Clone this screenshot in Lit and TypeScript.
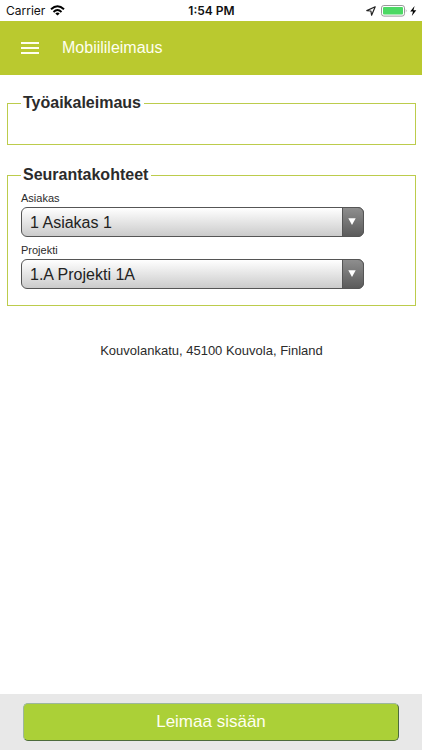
import { LitElement, html, css } from "lit";
import { customElement, property } from "lit/decorators.js";

@customElement("status-bar")
class StatusBar extends LitElement {
  static styles = css`
    :host {
      display: grid;
      grid-template-columns: 1fr auto 1fr;
      align-items: center;
      height: 21px;
      padding: 0 5px 0 6px;
      box-sizing: border-box;
      background: #fff;
      color: #111;
      font: 12px/20px Inter, Roboto, sans-serif;
    }
    .side {
      display: flex;
      align-items: center;
      gap: 5px;
    }
    .end {
      justify-content: flex-end;
    }
    .time {
      font-weight: 600;
    }
    svg {
      display: block;
    }
  `;

  render() {
    return html`
      <div class="side">
        <span>Carrier</span>
        <svg width="15" height="11" viewBox="0 0 15 11" fill="none" stroke="#000" stroke-width="2" aria-hidden="true">
          <path d="M1 4.3Q7.5 -1.7 14 4.3" />
          <path d="M3.5 6.9Q7.5 3.2 11.5 6.9" />
          <path d="M7.5 10.6L5.3 8.5Q7.5 6.7 9.7 8.5Z" fill="#000" stroke="none" />
        </svg>
      </div>
      <span class="time">1:54 PM</span>
      <div class="side end">
        <svg width="10" height="10" viewBox="0 0 10 10" fill="none" stroke="#222" stroke-width="1.2" stroke-linejoin="round" aria-hidden="true">
          <path d="M9.2 0.8L0.8 4.6L4.9 5L5.6 9.2Z" />
        </svg>
        <svg width="36" height="12" viewBox="0 0 36 12" aria-hidden="true">
          <rect x="0.5" y="0.5" width="23" height="10.6" rx="2.4" fill="#fff" stroke="#999" />
          <rect x="2" y="2" width="20" height="7.6" rx="1" fill="#4cd964" />
          <path d="M24.8 4Q26.4 5.8 24.8 7.6Z" fill="#999" />
          <path d="M33.6 1L29.2 6.5H32L30.8 11L35.3 5.2H32.4Z" fill="#000" />
        </svg>
      </div>
    `;
  }
}

@customElement("select-field")
class SelectField extends LitElement {
  @property() label = "";
  @property() value = "";

  static styles = css`
    :host {
      display: block;
    }
    label {
      display: block;
      font-size: 11px;
      line-height: 18px;
    }
    .box {
      position: relative;
      width: 90%;
    }
    select {
      appearance: none;
      display: block;
      width: 100%;
      height: 30px;
      margin: 0;
      padding: 0 30px 0 8px;
      border: 1px solid #555;
      border-radius: 6px;
      background: linear-gradient(#fff, #cbcbcb);
      color: #222;
      font: inherit;
      font-size: 16px;
    }
    .arrow {
      position: absolute;
      top: 0;
      right: 0;
      bottom: 0;
      width: 22px;
      display: flex;
      align-items: center;
      justify-content: center;
      box-sizing: border-box;
      padding: 0 2px 2px 0;
      border: 1px solid #555;
      border-radius: 0 6px 6px 0;
      background: linear-gradient(#8e8e8e, #5b5b5b);
      pointer-events: none;
    }
  `;

  render() {
    return html`
      <label for="field">${this.label}</label>
      <div class="box">
        <select id="field">
          <option>${this.value}</option>
        </select>
        <span class="arrow">
          <svg width="8" height="7" viewBox="0 0 8 7" aria-hidden="true"><path d="M0.3 0.3H7.7L4 7Z" fill="#fff" /></svg>
        </span>
      </div>
    `;
  }
}

@customElement("app-root")
class AppRoot extends LitElement {
  static styles = css`
    :host {
      display: flex;
      flex-direction: column;
      min-height: 100vh;
      background: #fff;
      color: #2b2b2b;
      font-family: "Liberation Sans", Arial, sans-serif;
    }
    header {
      display: flex;
      align-items: center;
      gap: 22px;
      height: 54px;
      padding: 0 20px;
      background: #bac92f;
      color: #fffff0;
    }
    .menu {
      display: block;
      padding: 0;
      border: 0;
      background: none;
      color: inherit;
    }
    .menu svg {
      display: block;
    }
    h1 {
      margin: 0;
      font-size: 16px;
      font-weight: 400;
      line-height: 20px;
    }
    main {
      flex: 1;
      display: flex;
      flex-direction: column;
      gap: 20px;
      padding: 18px 6px 20px 7px;
    }
    fieldset {
      min-width: 0;
      min-height: 52px;
      margin: 0;
      padding: 0 13px 16px;
      box-sizing: border-box;
      border: 1px solid #bccc4c;
    }
    legend {
      padding: 0 3px 0 2px;
      font-size: 16px;
      font-weight: 700;
      line-height: 20px;
    }
    .fields {
      display: flex;
      flex-direction: column;
      gap: 4px;
      padding-top: 4px;
    }
    .address {
      margin: 0;
      padding-top: 16px;
      font-size: 13px;
      line-height: 18px;
      text-align: center;
    }
    footer {
      padding: 9px 23px;
      background: #e8e8e8;
    }
    .stamp {
      display: block;
      width: 100%;
      height: 38px;
      padding: 0;
      border: 1px solid;
      border-color: #9db79c #4d6b3c #4d6b3c #9db79c;
      border-radius: 5px;
      background: #abd037;
      color: #fffff0;
      font: inherit;
      font-size: 17px;
    }
  `;

  render() {
    return html`
      <status-bar></status-bar>
      <header>
        <button class="menu" aria-label="Valikko">
          <svg width="20" height="14" viewBox="0 0 20 14" fill="currentColor">
            <path d="M1 1H19V3H1ZM1 6H19V8H1ZM1 11H19V13H1Z" />
          </svg>
        </button>
        <h1>Mobiilileimaus</h1>
      </header>
      <main>
        <fieldset>
          <legend>Työaikaleimaus</legend>
        </fieldset>
        <fieldset>
          <legend>Seurantakohteet</legend>
          <div class="fields">
            <select-field label="Asiakas" value="1 Asiakas 1"></select-field>
            <select-field label="Projekti" value="1.A Projekti 1A"></select-field>
          </div>
        </fieldset>
        <p class="address">Kouvolankatu, 45100 Kouvola, Finland</p>
      </main>
      <footer>
        <button class="stamp">Leimaa sisään</button>
      </footer>
    `;
  }
}
